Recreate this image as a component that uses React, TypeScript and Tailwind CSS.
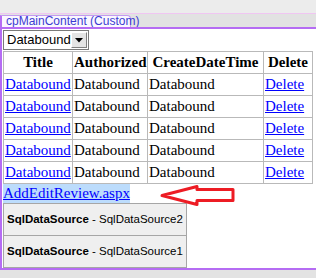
import React from "react";

const rows = [0, 1, 2, 3, 4];

export default function App() {
  const cell = "border-r border-b border-[#b9b9b9] h-[22px] px-[1px] whitespace-nowrap leading-[21px]";
  return (
    <div className="w-[316px] h-[278px] bg-white overflow-hidden flex flex-col" style={{ fontFamily: '"Liberation Serif", serif' }}>
      <div className="h-[13px] bg-[#ececec] shrink-0" />
      <div className="h-px bg-[#f0c6f2] shrink-0" />
      <div className="h-[13px] bg-[#e2e2e2] shrink-0 flex items-end">
        <div
          className="h-[12px] w-[131px] bg-[#faf7ff] border-t border-r border-[#c39af0] border-l-2 border-l-[#b56cf3] rounded-tr-[4px] pl-[4px] text-[12px] leading-[11px] text-[#3c3cd2] whitespace-nowrap"
          style={{ fontFamily: '"Liberation Sans", sans-serif' }}
        >
          cpMainContent (Custom)
        </div>
      </div>
      <div className="h-[2px] bg-[#b56cf3] shrink-0" />
      <div className="h-[239px] shrink-0 border-l-2 border-[#b56cf3] pl-px flex flex-col">
        <div className="mt-px h-[20px] w-[86px] border border-[#7a7a7a] bg-white flex items-center">
          <span
            className="flex-1 pl-[3px] text-[13px] leading-[18px] text-black"
            style={{ fontFamily: '"Liberation Sans", sans-serif' }}
          >
            Databound
          </span>
          <div className="h-[16px] w-[16px] mr-px bg-[#e4e4e4] border border-t-white border-l-white border-r-[#808080] border-b-[#808080] flex items-center justify-center">
            <svg width="8" height="5" viewBox="0 0 8 5">
              <path d="M0 0 H8 L4 4.5 Z" fill="#000" />
            </svg>
          </div>
        </div>
        <div className="mt-px w-[310px] grid grid-cols-[69px_75px_116px_49px] border-t border-l border-[#b9b9b9] text-[15px] text-black">
          <div className={cell + " font-bold text-center"}>Title</div>
          <div className={cell + " font-bold text-center"}>Authorized</div>
          <div className={cell + " font-bold text-center"}>CreateDateTime</div>
          <div className={cell + " font-bold text-center"}>Delete</div>
          {rows.map((r) => (
            <React.Fragment key={r}>
              <div className={cell}>
                <span className="text-[#0000ff] underline">Databound</span>
              </div>
              <div className={cell}>Databound</div>
              <div className={cell}>Databound</div>
              <div className={cell + " pl-[1px]"}>
                <span className="text-[#0000ff] underline">Delete</span>
              </div>
            </React.Fragment>
          ))}
        </div>
        <div className="relative h-[19px] flex items-center">
          <span className="bg-[#bcdcfc] h-[19px] leading-[19px] text-[15px] text-[#0000ff] underline whitespace-nowrap">
            AddEditReview.aspx
          </span>
          <svg className="absolute left-[153px] top-[-1px]" width="82" height="25" viewBox="0 0 82 25">
            <polygon
              points="6,12.5 41,3.5 41,6.5 77,6.5 77,17.5 41,17.5 41,21.5"
              fill="none"
              stroke="#ed1c24"
              strokeWidth="3"
              strokeLinejoin="round"
            />
          </svg>
        </div>
        <div
          className="w-[184px] flex-1 border border-[#a6a6a6] bg-[#efefef] flex flex-col text-[11.5px] text-black"
          style={{ fontFamily: '"Liberation Sans", sans-serif' }}
        >
          <div className="h-[32px] border-b border-[#a6a6a6] flex items-center pl-[3px] whitespace-nowrap">
            <b>SqlDataSource</b>&nbsp;- SqlDataSource2
          </div>
          <div className="flex-1 flex items-center pl-[3px] whitespace-nowrap">
            <b>SqlDataSource</b>&nbsp;- SqlDataSource1
          </div>
        </div>
      </div>
      <div className="h-[2px] bg-[#b56cf3] shrink-0" />
      <div className="flex-1 bg-[#e3e3e3]" />
    </div>
  );
}
